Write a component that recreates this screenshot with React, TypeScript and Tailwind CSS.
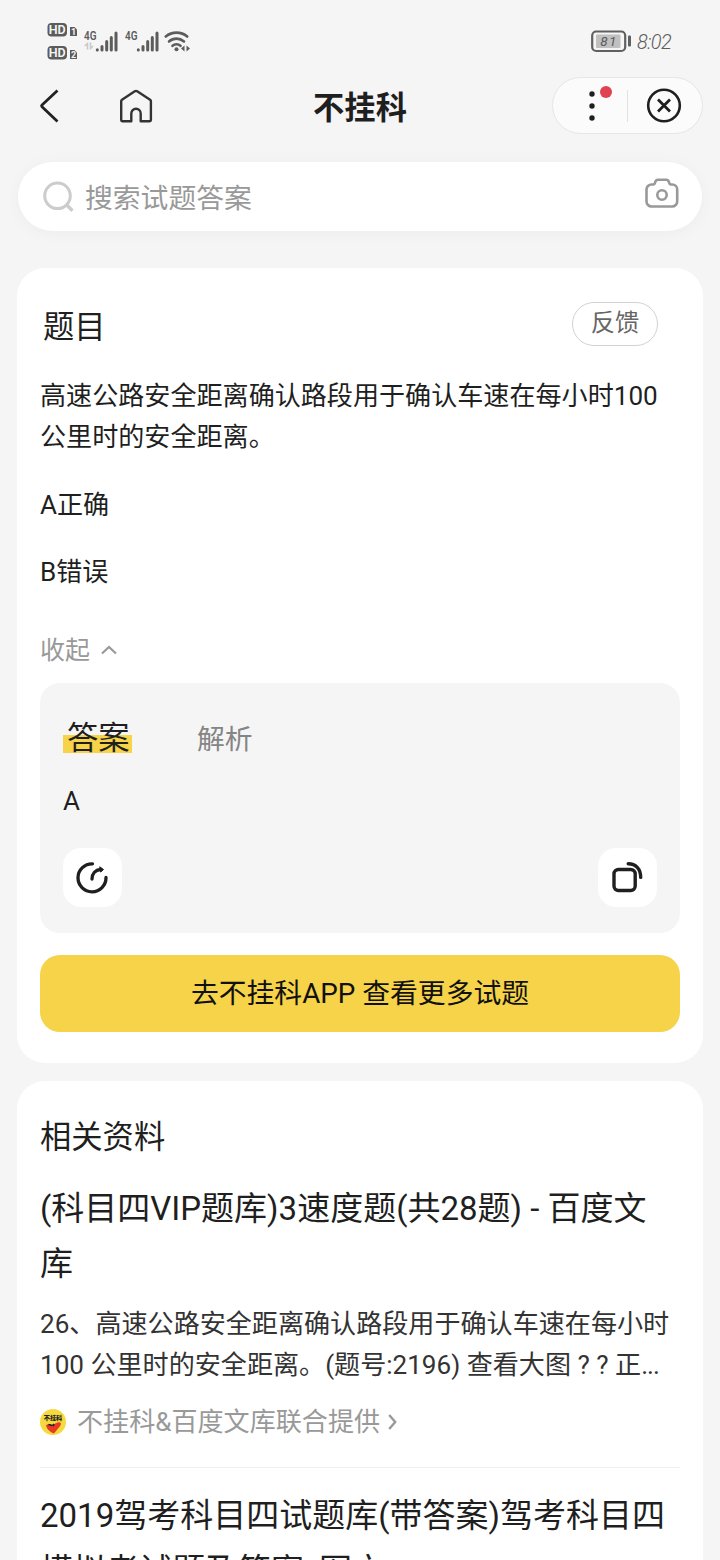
import React from 'react';

interface IconProps {
  className?: string;
}

const HdBadge: React.FC<{ sim: string }> = ({ sim }) => (
  <svg width="31" height="16" viewBox="0 0 31 16">
    <rect x="0.500" y="1" width="19.500" height="13.500" rx="4" fill="#5c5c5c" />
    <text x="10.200" y="12.200" textAnchor="middle" fontFamily="Roboto, sans-serif" fontSize="12.500" fontWeight="600" fill="#f5f5f5">
      HD
    </text>
    <path d="M23 5h4.500l2.500 2.500V14h-7z" fill="#5c5c5c" />
    <text x="26.500" y="13" textAnchor="middle" fontFamily="Roboto, sans-serif" fontSize="9" fontWeight="700" fill="#f5f5f5">
      {sim}
    </text>
  </svg>
);

const Signal: React.FC<{ data?: boolean }> = ({ data }) => (
  <svg width="35" height="26" viewBox="0 0 35 26">
    <text x="0" y="11.500" fontFamily="Roboto, sans-serif" fontSize="12.500" fontWeight="600" fill="#5c5c5c" textLength="12.500" lengthAdjust="spacingAndGlyphs">
      4G
    </text>
    {data && (
      <path d="M3.500 14.500v7M0.800 18l2.700-2.500M6.500 14.500v7M9 18l-2.500 2.500" stroke="#c9c9c9" strokeWidth="1.600" fill="none" />
    )}
    <g stroke="#5c5c5c" strokeWidth="3" strokeLinecap="round">
      <path d="M13.300 21.800v.2M18 18.500v3.500M22.700 13.500v8.500M27.300 9.500v12.500M32 5v17" />
    </g>
  </svg>
);

const Wifi = () => (
  <svg width="27" height="24" viewBox="0 0 27 24" fill="none" stroke="#5c5c5c" strokeLinecap="round">
    <path d="M1.800 6.500c6.200-5.200 15.300-5.200 21.400 0" strokeWidth="2.600" />
    <path d="M5 11.500c4.300-3.800 10.600-3.800 15 0" strokeWidth="2.600" />
    <path d="M8.500 15.800c2.300-2 5.700-2 8 0" strokeWidth="2.600" />
    <circle cx="12.500" cy="19.200" r="2" fill="#5c5c5c" stroke="none" />
    <path d="M20.500 15.500v6l-3.500-3zM22.500 15.500v6l3.500-3z" fill="#5c5c5c" stroke="none" />
  </svg>
);

const Battery = () => (
  <svg width="41" height="23" viewBox="0 0 41 23">
    <rect x="1.200" y="1.500" width="33" height="19.500" rx="4" fill="none" stroke="#606060" strokeWidth="2.200" />
    <rect x="5" y="4.500" width="24.500" height="13.500" rx="1" fill="#c0c0c0" />
    <text x="18" y="16" textAnchor="middle" fontFamily="Roboto, sans-serif" fontSize="13.500" fontStyle="italic" fontWeight="400" fill="#5a5a5a" letterSpacing="1.500">
      81
    </text>
    <rect x="37" y="5.500" width="3" height="11" rx="1" fill="#606060" />
  </svg>
);

const BackIcon: React.FC<IconProps> = ({ className }) => (
  <svg className={className} width="20" height="34" viewBox="0 0 20 34" fill="none" stroke="#222" strokeWidth="2.800" strokeLinejoin="round">
    <path d="M18.500 1.500 3 16a1.300 1.300 0 0 0 0 1.800L18.500 32.500" />
  </svg>
);

const HomeIcon: React.FC<IconProps> = ({ className }) => (
  <svg className={className} width="34" height="34" viewBox="0 0 34 34" fill="none" stroke="#333" strokeWidth="2.400" strokeLinejoin="round">
    <path d="M2.200 12.200a2 2 0 0 1 .8-1.500L15.800 2.300a2.200 2.200 0 0 1 2.400 0l12.900 8.400a2 2 0 0 1 .8 1.500V31a1.200 1.200 0 0 1-1.200 1.200h-9V24.500a4.700 4.700 0 0 0-9.400 0v7.700h-9A1.200 1.200 0 0 1 2.200 31z" />
  </svg>
);

const SearchIcon = () => (
  <svg width="32" height="32" viewBox="0 0 32 32" fill="none" stroke="#ccc" strokeWidth="3">
    <circle cx="14.500" cy="14.800" r="12.800" />
    <path d="m23.500 23.800 6 6" strokeWidth="3.400" />
  </svg>
);

const CameraIcon: React.FC<IconProps> = ({ className }) => (
  <svg className={className} width="34" height="31" viewBox="0 0 34 31" fill="none" stroke="#999" strokeWidth="2.600" strokeLinejoin="round">
    <path d="M6.500 6.500h1.800c1.200 0 1.500-.7 1.800-2 .4-1.900 1-2.800 2.800-2.800h8.400c1.800 0 2.400.9 2.800 2.800.3 1.300.6 2 1.800 2h1.300a5 5 0 0 1 5 5v12a5 5 0 0 1-5 5H6.500a5 5 0 0 1-5-5v-12a5 5 0 0 1 5-5z" />
    <circle cx="17" cy="17" r="4.700" />
  </svg>
);

const PracticeIcon = () => (
  <svg width="34" height="34" viewBox="0 0 34 34" fill="none" stroke="#1f1f1f" strokeWidth="3.300" strokeLinecap="round">
    <path d="M17.500 2.800A14 14 0 1 0 31 16.500" />
    <path d="M17 18c0-5.500 3.500-9 8.500-9.500" />
    <path d="m25 6 3.500 2.500-2.500 2.300z" fill="#1f1f1f" strokeWidth="1" strokeLinejoin="round" />
  </svg>
);

const CopyIcon = () => (
  <svg width="34" height="34" viewBox="0 0 34 34" fill="none" stroke="#1f1f1f" strokeWidth="3.400" strokeLinecap="round">
    <rect x="4" y="8.500" width="21.200" height="21" rx="4.500" />
    <path d="M18.200 2.800c7.500 0 12.500 5 12.500 13.600" />
  </svg>
);

const SourceLogo = () => (
  <svg width="26" height="26" viewBox="0 0 26 26">
    <circle cx="13" cy="13" r="13" fill="#f5d93f" />
    <text x="13" y="11.300" textAnchor="middle" fontFamily="'Noto Sans CJK SC', sans-serif" fontSize="6.200" fontWeight="900" fill="#222">
      不挂科
    </text>
    <path d="M6 16.500c1.500-2.300 4.500-2 6 0 2.500-1 4.500-3.700 7.500-3.200 2.200.5 1.500 3 .2 4.200L14 24.500c-2.800-.9-7-3.500-8-8z" fill="#e63b20" />
    <path d="m8.500 15.500 4 1M14 15l-1 2" stroke="#222" strokeWidth="1.800" />
  </svg>
);

const StatusBar = () => (
  <header className="flex h-[77px] items-start justify-between px-[47px]">
    <div className="flex pt-[22px]">
      <div className="flex flex-col gap-[7px]">
        <HdBadge sim="1" />
        <HdBadge sim="2" />
      </div>
      <div className="flex gap-[6px] pt-[6px] pl-[6px]">
        <Signal data />
        <Signal />
      </div>
      <div className="pt-[8px] pl-[4px]">
        <Wifi />
      </div>
    </div>
    <div className="flex items-center gap-[5px] pt-[29px]">
      <Battery />
      <span className="w-[36px] pt-px text-[20px] leading-[24px] font-light tracking-[-0.6px] whitespace-nowrap text-[#5c5c5c] italic">8:02</span>
    </div>
  </header>
);

const NavBar = () => (
  <nav className="grid h-[57px] grid-cols-[1fr_auto_1fr] items-center px-[17px]">
    <div className="flex items-center pl-[22px]">
      <BackIcon />
      <HomeIcon className="ml-[60px]" />
    </div>
    <h1 className="pt-[6px] text-[31.300px] leading-[40px] font-bold text-[#1f1f1f]">不挂科</h1>
    <div className="flex h-[57px] w-[151px] items-center justify-self-end rounded-full border border-[#e6e6e6] bg-[#fbfbfb]">
      <div className="relative flex w-[74px] justify-center pl-[4px]">
        <svg width="6" height="30" viewBox="0 0 6 30" fill="#1f1f1f">
          <circle cx="3" cy="3" r="2.700" />
          <circle cx="3" cy="15" r="2.700" />
          <circle cx="3" cy="27" r="2.700" />
        </svg>
        <span className="absolute -top-[5px] left-[47px] h-3 w-3 rounded-full bg-[#e0424f]" />
      </div>
      <div className="h-8 w-px bg-[#e2e2e2]" />
      <div className="flex flex-1 justify-center pr-[3px]">
        <svg width="36" height="36" viewBox="0 0 36 36" fill="none" stroke="#1f1f1f">
          <circle cx="18" cy="17.500" r="15.800" strokeWidth="2.600" />
          <path d="m12 11.500 12 12M24 11.500 12 23.500" strokeWidth="2.800" />
        </svg>
      </div>
    </div>
  </nav>
);

const SearchBar = () => (
  <div className="mx-[18px] mt-7 flex h-[69px] items-center rounded-full bg-white pr-[23px] pl-[25px] shadow-[0_2px_16px_rgba(0,0,0,0.040)]">
    <SearchIcon />
    <span className="ml-[10px] flex-1 pt-[5px] text-[27.800px] leading-[40px] text-[#999]">搜索试题答案</span>
    <CameraIcon className="mb-[7px]" />
  </div>
);

const AnswerPanel = () => (
  <div className="mt-[12px] h-[250px] rounded-[20px] bg-[#f5f5f5] px-[23px] pt-[33px]">
    <div className="flex h-[44px] items-center">
      <span className="w-[69px] bg-[linear-gradient(#f6d348,#f6d348)] bg-[length:100%_18px] bg-[position:0_20px] bg-no-repeat pt-[2px] pl-[4px] text-[31.300px] leading-[44px] text-[#1f1f1f]">
        答案
      </span>
      <span className="ml-[65px] pt-[3px] text-[27.800px] leading-[44px] text-[#858585]">解析</span>
    </div>
    <p className="mt-[21px] text-[26px] leading-[40px] text-[#1f1f1f]">A</p>
    <div className="mt-[27px] flex justify-between">
      <button className="flex h-[59px] w-[59px] items-center justify-center rounded-[18px] bg-white pr-px">
        <PracticeIcon />
      </button>
      <button className="flex h-[59px] w-[59px] items-center justify-center rounded-[18px] bg-white pr-px">
        <CopyIcon />
      </button>
    </div>
  </div>
);

const QuestionCard = () => (
  <section className="mx-[17px] mt-[37px] h-[795px] rounded-[28px] bg-white px-[23px] pt-[34px]">
    <div className="flex h-[44px] items-center justify-between pr-[22px] pl-[3px]">
      <h2 className="pt-[7px] text-[31.300px] leading-[44px] text-[#1f1f1f]">题目</h2>
      <button className="h-[44px] w-[86px] rounded-full border border-[#d2d2d2] pb-[3px] text-[24.300px] leading-[38px] text-[#666]">反馈</button>
    </div>
    <div className="mt-[30px] text-[26.080px] leading-[41px] text-[#1f1f1f]">
      <p>
        高速公路安全距离确认路段用于确认车速在每小时100
        <br />
        公里时的安全距离。
      </p>
      <p className="mt-[27px]">A正确</p>
      <p className="mt-[26px]">B错误</p>
    </div>
    <div className="mt-[37px] flex h-[41px] items-center gap-[11px] text-[25px] leading-[41px] text-[#999]">
      收起
      <svg className="mb-[2px]" width="16" height="10" viewBox="0 0 16 10" fill="none" stroke="#999" strokeWidth="2.200">
        <path d="m1 8.500 7-6.500 7 6.500" />
      </svg>
    </div>
    <AnswerPanel />
    <button className="mt-[22px] h-[77px] w-full rounded-[20px] bg-[#f6d348] text-[27.800px] leading-[75px] text-[#111]">
      去不挂科APP 查看更多试题
    </button>
  </section>
);

const RelatedCard = () => (
  <section className="mx-[17px] mt-[18px] h-[600px] rounded-[28px] bg-white px-[23px] pt-[35px] text-[#1f1f1f]">
    <h2 className="text-[31.300px] leading-[44px]">相关资料</h2>
    <article className="border-b border-[#efefef]">
      <h3 className="mt-[21px] text-[33px] leading-[55px]">
        (科目四VIP题库)3速度题(共28题) - 百度文
        <br />库
      </h3>
      <p className="mt-[13px] text-[26.080px] leading-[41px] whitespace-nowrap text-[#333]">
        26、高速公路安全距离确认路段用于确认车速在每小时
        <br />
        100 公里时的安全距离。(题号:2196) 查看大图 ? ? 正<span className="tracking-[-1px]">...</span>
      </p>
      <div className="mt-[16px] flex h-[40px] items-center text-[26.080px] leading-[40px] text-[#999]">
        <SourceLogo />
        <span className="ml-[11px]">不挂科&amp;百度文库联合提供</span>
        <svg className="ml-[8px]" width="9" height="16" viewBox="0 0 9 16" fill="none" stroke="#999" strokeWidth="2.400">
          <path d="m1.200 1 6 7-6 7" />
        </svg>
      </div>
      <div className="h-[25px]" />
    </article>
    <article>
      <h3 className="mt-[20px] text-[33px] leading-[55px] whitespace-nowrap">
        2019驾考科目四试题库(带答案)驾考科目四
        <br />
        模拟考试题及答案_图文
      </h3>
    </article>
  </section>
);

export default function App() {
  return (
    <div lang="zh-CN" className="h-[1560px] w-[720px] overflow-hidden bg-[#f5f5f5] font-['Roboto','Noto_Sans_CJK_SC',sans-serif]">
      <StatusBar />
      <NavBar />
      <SearchBar />
      <QuestionCard />
      <RelatedCard />
    </div>
  );
}
